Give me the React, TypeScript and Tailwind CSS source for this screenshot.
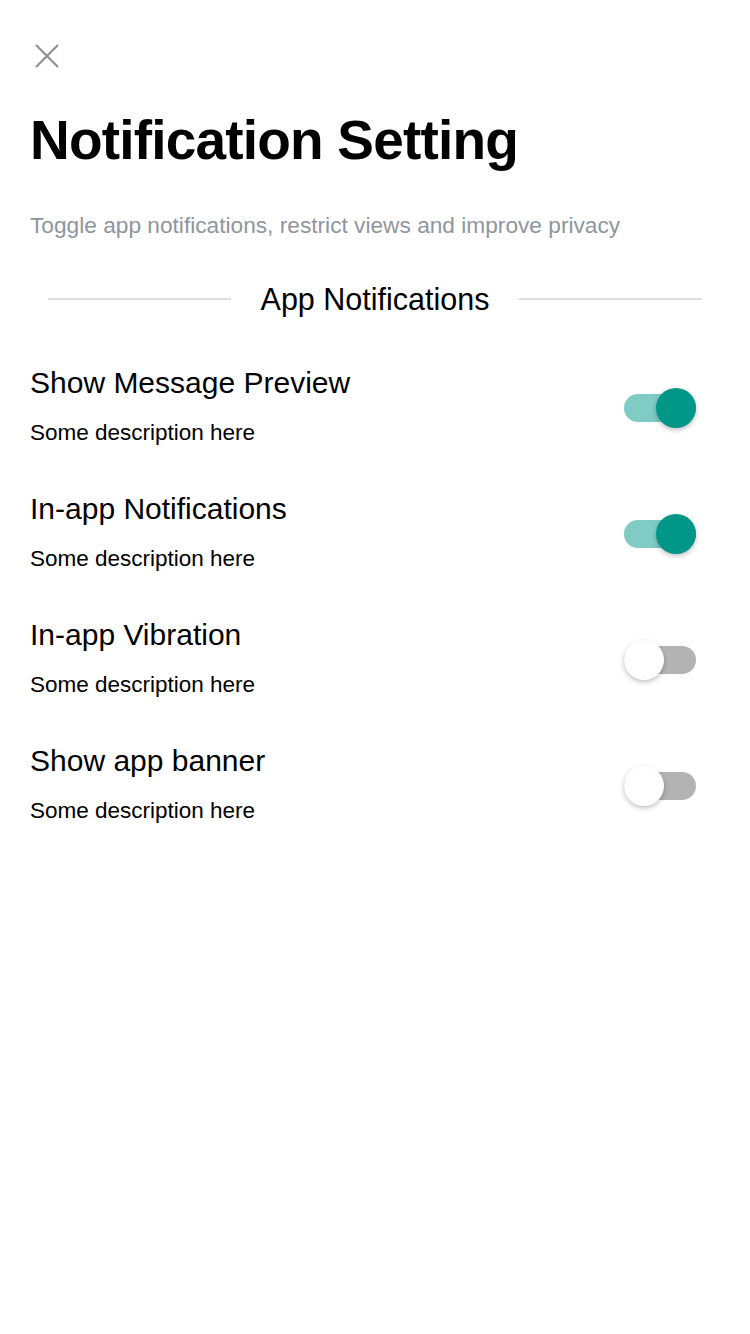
import { useState } from 'react';

interface SettingItem {
  id: string;
  title: string;
  description: string;
  enabled: boolean;
}

const initialSettings: SettingItem[] = [
  { id: 'preview', title: 'Show Message Preview', description: 'Some description here', enabled: true },
  { id: 'inapp', title: 'In-app Notifications', description: 'Some description here', enabled: true },
  { id: 'vibration', title: 'In-app Vibration', description: 'Some description here', enabled: false },
  { id: 'banner', title: 'Show app banner', description: 'Some description here', enabled: false },
];

function Toggle({ on, onChange }: { on: boolean; onChange: () => void }) {
  return (
    <button
      type="button"
      role="switch"
      aria-checked={on}
      onClick={onChange}
      className="relative mr-[24px] mt-[2px] h-10 w-[72px] shrink-0"
    >
      <span
        className={`absolute left-0 right-0 top-[6px] h-7 rounded-full ${on ? 'bg-[#80cbc4]' : 'bg-[#b3b3b3]'}`}
      />
      <span
        className={`absolute top-0 h-10 w-10 rounded-full shadow-[0_2px_5px_rgba(0,0,0,0.25)] ${
          on ? 'right-0 bg-[#009688]' : 'left-0 bg-white'
        }`}
      />
    </button>
  );
}

export default function App() {
  const [settings, setSettings] = useState(initialSettings);

  const toggle = (id: string) => {
    setSettings((prev) => prev.map((s) => (s.id === id ? { ...s, enabled: !s.enabled } : s)));
  };

  return (
    <div className="min-h-[1334px] w-[750px] bg-white px-[30px] font-['Liberation_Sans',Arial,sans-serif] text-black">
      {/* Close */}
      <div className="pt-[44px]">
        <button type="button" aria-label="Close" className="ml-[5px] block h-6 w-6">
          <svg width="24" height="24" viewBox="0 0 24 24" fill="none" stroke="#8a9199" strokeWidth="2.2">
            <path d="M1 1L23 23M23 1L1 23" />
          </svg>
        </button>
      </div>

      {/* Header */}
      <h1 className="mt-[40px] text-[55px] font-bold leading-[64px] tracking-[-0.8px]">Notification Setting</h1>
      <p className="mt-[37px] text-[22.7px] leading-[32px] text-[#8e969d]">
        Toggle app notifications, restrict views and improve privacy
      </p>

      {/* Section divider */}
      <div className="mt-[38px] flex h-10 items-center gap-[30px] px-[18px]">
        <div className="h-[2px] flex-1 bg-[#dedede]" />
        <span className="text-[30.5px] leading-[40px]">App Notifications</span>
        <div className="h-[2px] flex-1 bg-[#dedede]" />
      </div>

      {/* Settings */}
      <div className="mt-[25px]">
        {settings.map((s) => (
          <div key={s.id} className="flex items-center justify-between py-[21px]">
            <div>
              <div className="text-[30px] leading-[36px]">{s.title}</div>
              <div className="mt-[16px] text-[22.5px] leading-[32px]">{s.description}</div>
            </div>
            <Toggle on={s.enabled} onChange={() => toggle(s.id)} />
          </div>
        ))}
      </div>
    </div>
  );
}
